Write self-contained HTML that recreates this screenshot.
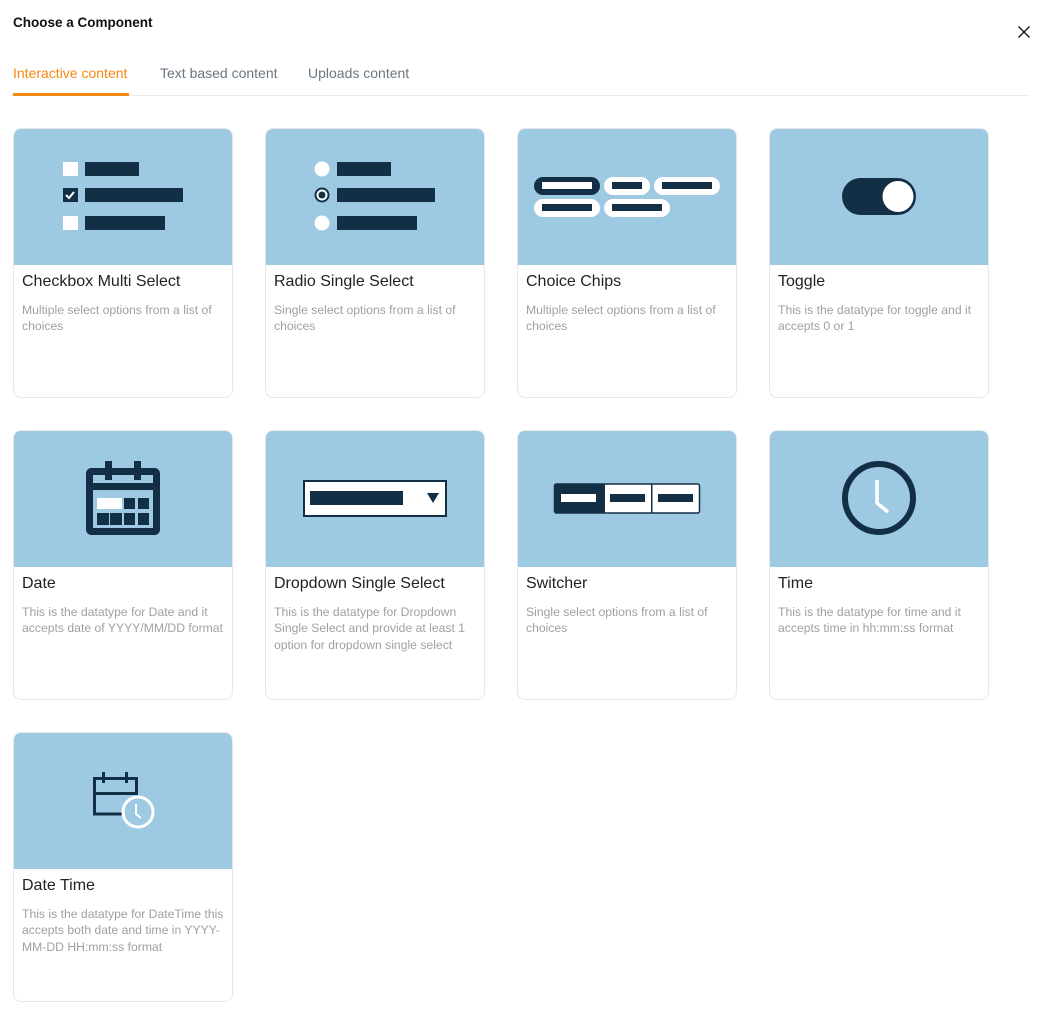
<!DOCTYPE html>
<html><head><meta charset="utf-8">
<style>
*{margin:0;padding:0;box-sizing:border-box}
body{width:1042px;height:1012px;background:#fff;font-family:"Liberation Sans",sans-serif;position:relative;overflow:hidden}
.t{position:absolute;left:13px;top:15px;font-size:13.5px;font-weight:bold;color:#111}
.tab{position:absolute;top:65px;font-size:14px;color:#6b7684;white-space:nowrap}
.card{position:absolute;width:220px;height:270px;border:1px solid #e8e8e8;border-radius:8px;overflow:hidden;background:#fff}
.img{width:220px;height:137px;background:#9dc9e3;display:block;margin:-1px 0 0 -1px}
.ct{position:absolute;left:8px;top:144px;font-size:16px;color:#222;white-space:nowrap}
.cd{position:absolute;left:8px;top:173px;font-size:12.2px;line-height:16.3px;color:#a0a0a0;white-space:nowrap}
</style></head><body>
<div class="t">Choose a Component</div>
<svg style="position:absolute;left:1017px;top:25px" width="14" height="14"><path d="M1.5 1.5L12.5 12.5M12.5 1.5L1.5 12.5" stroke="#222" stroke-width="1.5"/></svg>
<div class="tab" style="left:13px;color:#f5880e">Interactive content</div>
<div class="tab" style="left:160px">Text based content</div>
<div class="tab" style="left:308px">Uploads content</div>
<div style="position:absolute;left:13px;top:95px;width:1017px;height:1px;background:#ececec"></div>
<div style="position:absolute;left:13px;top:93px;width:116px;height:3px;background:#f5880e"></div>

<div class="card" style="left:13px;top:128px"><svg class="img" viewBox="0 0 220 137"><rect x="50" y="34" width="15" height="14" fill="#fff"/><rect x="50" y="60" width="15" height="14" fill="#132f46"/><path d="M53 67l3 3 5-6" stroke="#fff" stroke-width="2" fill="none"/><rect x="50" y="88" width="15" height="14" fill="#fff"/><rect x="72" y="34" width="54" height="14" fill="#132f46"/><rect x="72" y="60" width="98" height="14" fill="#132f46"/><rect x="72" y="88" width="80" height="14" fill="#132f46"/></svg>
<div class="ct">Checkbox Multi Select</div><div class="cd">Multiple select options from a list of<br>choices</div></div>

<div class="card" style="left:265px;top:128px"><svg class="img" viewBox="0 0 220 137"><circle cx="57" cy="41" r="7.5" fill="#fff"/><circle cx="57" cy="67" r="6.5" fill="#fff" stroke="#132f46" stroke-width="2"/><circle cx="57" cy="67" r="3.5" fill="#132f46"/><circle cx="57" cy="95" r="7.5" fill="#fff"/><rect x="72" y="34" width="54" height="14" fill="#132f46"/><rect x="72" y="60" width="98" height="14" fill="#132f46"/><rect x="72" y="88" width="80" height="14" fill="#132f46"/></svg>
<div class="ct">Radio Single Select</div><div class="cd">Single select options from a list of<br>choices</div></div>

<div class="card" style="left:517px;top:128px"><svg class="img" viewBox="0 0 220 137"><rect x="17" y="49" width="66" height="18" rx="9" fill="#132f46"/><rect x="25" y="54" width="50" height="7" fill="#fff"/><rect x="87" y="49" width="46" height="18" rx="9" fill="#fff"/><rect x="95" y="54" width="30" height="7" fill="#132f46"/><rect x="137" y="49" width="66" height="18" rx="9" fill="#fff"/><rect x="145" y="54" width="50" height="7" fill="#132f46"/><rect x="17" y="71" width="66" height="18" rx="9" fill="#fff"/><rect x="25" y="76" width="50" height="7" fill="#132f46"/><rect x="87" y="71" width="66" height="18" rx="9" fill="#fff"/><rect x="95" y="76" width="50" height="7" fill="#132f46"/></svg>
<div class="ct">Choice Chips</div><div class="cd">Multiple select options from a list of<br>choices</div></div>

<div class="card" style="left:769px;top:128px"><svg class="img" viewBox="0 0 220 137"><rect x="73" y="50" width="74" height="37" rx="18.5" fill="#132f46"/><circle cx="129" cy="68.5" r="15.5" fill="#fff"/></svg>
<div class="ct">Toggle</div><div class="cd">This is the datatype for toggle and it<br>accepts 0 or 1</div></div>

<div class="card" style="left:13px;top:430px"><svg class="img" viewBox="0 0 220 137"><rect x="76.5" y="41.5" width="67" height="60" rx="2" fill="none" stroke="#132f46" stroke-width="7"/><rect x="76" y="53" width="68" height="7" fill="#132f46"/><rect x="92" y="31" width="7" height="19" fill="#132f46"/><rect x="121" y="31" width="7" height="19" fill="#132f46"/><rect x="84" y="68" width="25" height="11" fill="#fff"/><rect x="111" y="68" width="11" height="11" fill="#132f46"/><rect x="125" y="68" width="11" height="11" fill="#132f46"/><rect x="84" y="83" width="12" height="12" fill="#132f46"/><rect x="97" y="83" width="12" height="12" fill="#132f46"/><rect x="111" y="83" width="11" height="12" fill="#132f46"/><rect x="125" y="83" width="11" height="12" fill="#132f46"/></svg>
<div class="ct">Date</div><div class="cd">This is the datatype for Date and it<br>accepts date of YYYY/MM/DD format</div></div>

<div class="card" style="left:265px;top:430px"><svg class="img" viewBox="0 0 220 137"><rect x="39" y="51" width="142" height="35" fill="#fff" stroke="#132f46" stroke-width="2"/><rect x="45" y="61" width="93" height="14" fill="#132f46"/><path d="M162 63h12l-6 10z" fill="#132f46"/></svg>
<div class="ct">Dropdown Single Select</div><div class="cd">This is the datatype for Dropdown<br>Single Select and provide at least 1<br>option for dropdown single select</div></div>

<div class="card" style="left:517px;top:430px"><svg class="img" viewBox="0 0 220 137"><rect x="37.5" y="54" width="145" height="29" rx="2" fill="#fff" stroke="#132f46" stroke-width="1.5"/><path d="M39.5 54H88V83H39.5a2 2 0 0 1-2-2V56a2 2 0 0 1 2-2z" fill="#132f46"/><rect x="134" y="54" width="1.5" height="29" fill="#132f46"/><rect x="44" y="64" width="35" height="8" fill="#fff"/><rect x="93" y="64" width="35" height="8" fill="#132f46"/><rect x="141" y="64" width="35" height="8" fill="#132f46"/></svg>
<div class="ct">Switcher</div><div class="cd">Single select options from a list of<br>choices</div></div>

<div class="card" style="left:769px;top:430px"><svg class="img" viewBox="0 0 220 137"><circle cx="110" cy="68" r="34" fill="none" stroke="#132f46" stroke-width="6"/><path d="M108 50V73L119 82" stroke="#fff" stroke-width="3.5" fill="none"/></svg>
<div class="ct">Time</div><div class="cd">This is the datatype for time and it<br>accepts time in hh:mm:ss format</div></div>

<div class="card" style="left:13px;top:732px"><svg class="img" viewBox="0 0 220 137"><path d="M110 82H81.5V46.5H123.5V62" fill="none" stroke="#132f46" stroke-width="3"/><rect x="80" y="60" width="45" height="3" fill="#132f46"/><rect x="89" y="40" width="3" height="11" fill="#132f46"/><rect x="112" y="40" width="3" height="11" fill="#132f46"/><circle cx="125" cy="80" r="15" fill="#9dc9e3" stroke="#fff" stroke-width="3"/><path d="M123 72V82L128 86" stroke="#fff" stroke-width="2" fill="none"/></svg>
<div class="ct">Date Time</div><div class="cd">This is the datatype for DateTime this<br>accepts both date and time in YYYY-<br>MM-DD HH:mm:ss format</div></div>
</body></html>
